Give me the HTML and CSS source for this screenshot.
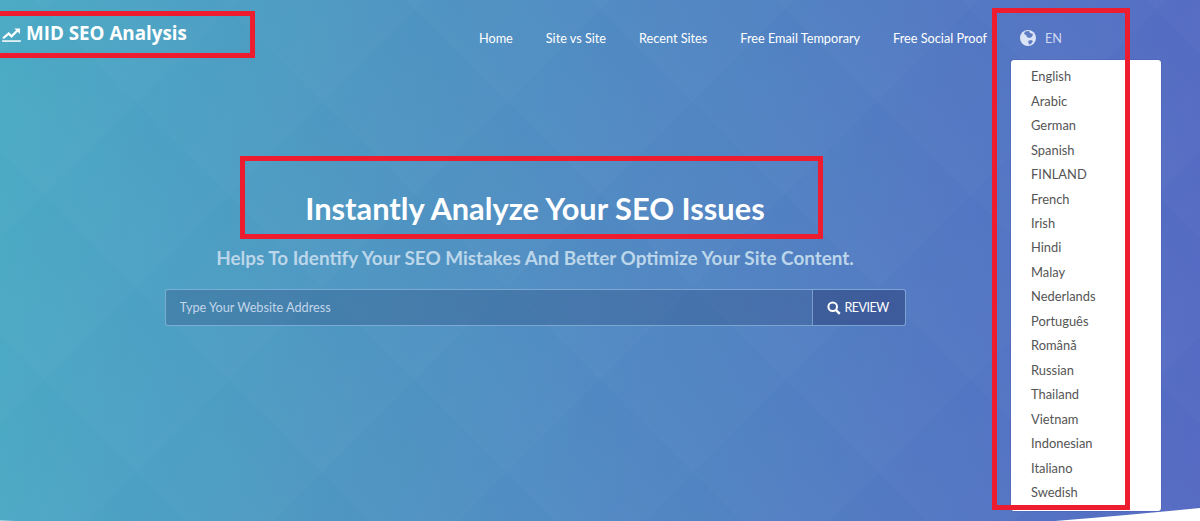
FILE: index.html
```html
<!DOCTYPE html>
<html lang="en">
<head>
  <meta charset="UTF-8" />
  <title>MID SEO Analysis</title>
  <link rel="stylesheet" href="styles.css">
</head>
<body>
  <div class="hero">
    <header class="topbar">
      <a class="logo" href="#">
        <svg class="logo-icon" viewBox="0 0 20 16"><path d="M0 15h20" stroke="#fff" stroke-width="1.6" fill="none"/><path d="M1 12l6-5 3 3 6-6" stroke="#fff" stroke-width="2.4" fill="none"/><path d="M13 1.500h6v6z" fill="#fff"/></svg>
        MID SEO Analysis
      </a>
      <nav class="nav">
        <a href="#">Home</a>
        <a href="#">Site vs Site</a>
        <a href="#">Recent Sites</a>
        <a href="#">Free Email Temporary</a>
        <a href="#">Free Social Proof</a>
        <a href="#" class="lang">
          <svg class="globe" viewBox="0 0 16 16"><circle cx="8" cy="8" r="8" fill="#dbe3f6"/><path d="M5 1.500l4-.5 1 2 3 1-1 3-3 1-2-1-1-2-2-1zM8 11l3-1 2 1-2 3-2 .5z" fill="#5f7cc4"/></svg>
          <span>EN</span>
        </a>
      </nav>
    </header>

    <section class="intro">
      <h1>Instantly Analyze Your SEO Issues</h1>
      <h2>Helps To Identify Your SEO Mistakes And Better Optimize Your Site Content.</h2>
      <form class="search">
        <input type="text" placeholder="Type Your Website Address" />
        <button type="button">
          <svg class="search-icon" viewBox="0 0 14 14"><circle cx="5.700" cy="5.700" r="4.300" stroke="#fff" stroke-width="2" fill="none"/><path d="M8.800 8.800l4 4" stroke="#fff" stroke-width="2.400"/></svg>
          REVIEW
        </button>
      </form>
    </section>

    <ul class="lang-menu">
      <li>English</li>
      <li>Arabic</li>
      <li>German</li>
      <li>Spanish</li>
      <li>FINLAND</li>
      <li>French</li>
      <li>Irish</li>
      <li>Hindi</li>
      <li>Malay</li>
      <li>Nederlands</li>
      <li>Português</li>
      <li>Românǎ</li>
      <li>Russian</li>
      <li>Thailand</li>
      <li>Vietnam</li>
      <li>Indonesian</li>
      <li>Italiano</li>
      <li>Swedish</li>
    </ul>

    <svg class="wave" viewBox="0 0 1200 20" preserveAspectRatio="none"><path d="M0 19.500Q8 19.500 16 20H0zM1055 20Q1130 14 1200 7V20z" fill="#fff"/></svg>

    <div class="mark mark-logo"></div>
    <div class="mark mark-title"></div>
    <div class="mark mark-lang"></div>
  </div>
</body>
</html>
```

FILE: styles.css
```css
body {
  margin: 0;
  font-family: 'Lato', sans-serif;
  overflow: hidden;
}

.hero {
  position: relative;
  height: 521px;
  overflow: hidden;
  background-color: #4f8cc2;
  background-image:
    repeating-linear-gradient(45deg, rgba(255,255,255,0.016) 0, rgba(255,255,255,0) 131px),
    repeating-linear-gradient(-45deg, rgba(255,255,255,0.016) 0, rgba(255,255,255,0) 131px),
    linear-gradient(95deg, #4aaac4 0%, #4f90c2 40%, #5469c3 100%);
}

.topbar {
  display: flex;
  justify-content: space-between;
  align-items: flex-start;
}

.logo {
  display: flex;
  align-items: center;
  gap: 5px;
  margin: 20px 0 0 2px;
  color: #fff;
  font-family: 'Open Sans', sans-serif;
  font-size: 18.8px;
  font-weight: 700;
  line-height: 26px;
  text-decoration: none;
}

.logo-icon {
  width: 19px;
  height: 15px;
  margin-top: 2px;
}

.nav {
  display: flex;
  gap: 33px;
  margin: 29px 138px 0 0;
}

.nav a {
  color: #fff;
  font-size: 12.7px;
  line-height: 18px;
  text-decoration: none;
}

.lang {
  display: flex;
  align-items: center;
  gap: 9px;
}

.lang span {
  color: #cdd9f2;
}

.globe {
  width: 16px;
  height: 16px;
}

.intro {
  display: flex;
  flex-direction: column;
  align-items: center;
  width: 1070px;
  margin-top: 140px;
}

h1 {
  margin: 0;
  color: #fff;
  font-size: 30.8px;
  font-weight: 700;
  line-height: 44px;
}

h2 {
  margin: 13px 0 0;
  color: #bcd6ea;
  font-size: 18.9px;
  font-weight: 700;
  line-height: 28px;
}

.search {
  display: flex;
  width: 741px;
  height: 37px;
  margin-top: 17px;
  border: 1px solid rgba(160, 200, 235, 0.6);
  border-radius: 3px;
  box-sizing: border-box;
  background: rgba(50, 80, 130, 0.35);
}

.search input {
  flex: 1;
  padding: 0 14px 2px;
  border: none;
  background: none;
  color: #fff;
  font-family: 'Lato', sans-serif;
  font-size: 12.7px;
  outline: none;
}

.search input::placeholder {
  color: #c2d6ea;
}

.search button {
  display: flex;
  align-items: center;
  justify-content: center;
  gap: 3px;
  width: 93px;
  padding: 0 1px 0 0;
  border: none;
  border-left: 1px solid rgba(160, 200, 235, 0.6);
  border-radius: 0 3px 3px 0;
  background: rgba(50, 70, 130, 0.42);
  color: #fff;
  font-family: 'Lato', sans-serif;
  font-size: 12.5px;
  letter-spacing: -0.5px;
}

.search-icon {
  width: 14px;
  height: 14px;
}

.lang-menu {
  position: absolute;
  top: 60px;
  left: 1011px;
  width: 150px;
  height: 451px;
  margin: 0;
  padding: 4.3px 0 0;
  box-sizing: border-box;
  list-style: none;
  background: #fff;
  border-radius: 3px;
  box-shadow: 0 0 1px rgba(30, 40, 90, 0.7);
}

.lang-menu li {
  padding-left: 20px;
  color: #555;
  font-size: 12.9px;
  line-height: 24.45px;
}

.wave {
  position: absolute;
  left: 0;
  bottom: 0;
  width: 1200px;
  height: 20px;
}

.mark {
  position: absolute;
  border: 5px solid #ed1c2e;
  box-sizing: border-box;
}

.mark-logo {
  top: 11px;
  left: -6px;
  width: 261px;
  height: 47px;
}

.mark-title {
  top: 156px;
  left: 240px;
  width: 583px;
  height: 83px;
}

.mark-lang {
  top: 8px;
  left: 992px;
  width: 138px;
  height: 502px;
}
```
